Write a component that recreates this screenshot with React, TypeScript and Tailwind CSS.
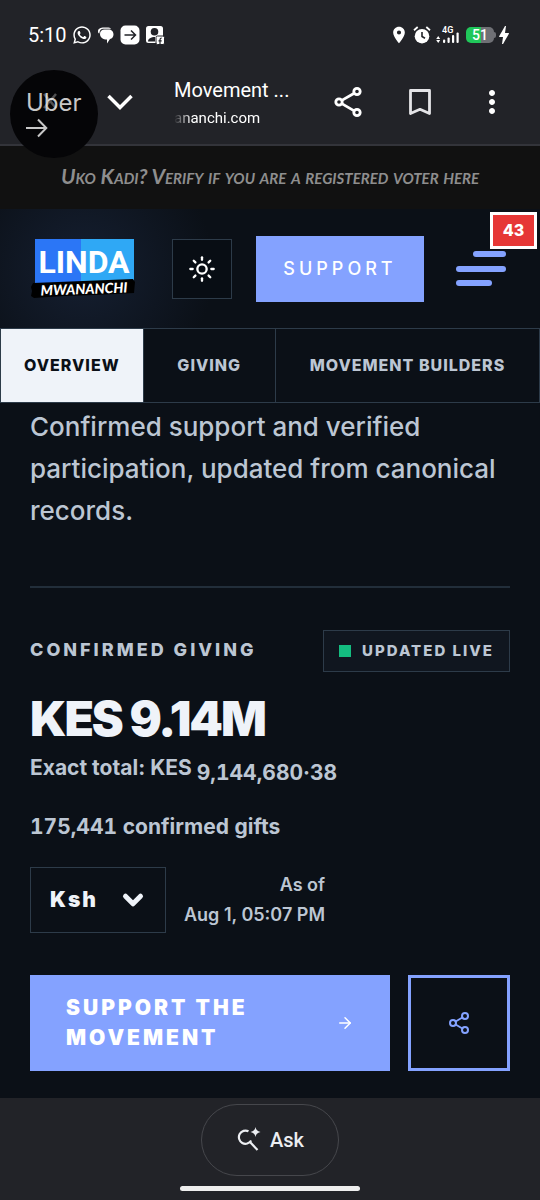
import React, { useState } from 'react';
import { ArrowRight, ChevronDown, Share2, Sun } from 'lucide-react';
import { FaWhatsapp } from 'react-icons/fa';
import { MdBolt, MdLocationOn, MdMoreVert } from 'react-icons/md';

const tabs = [
  { id: 'overview', label: 'OVERVIEW' },
  { id: 'giving', label: 'GIVING' },
  { id: 'builders', label: 'MOVEMENT BUILDERS' },
];

function StatusBar() {
  return (
    <div className="flex items-center justify-between h-[70px] pl-7 pr-8 text-white">
      <div className="flex items-center gap-[5px]">
        <span className="text-[20px] leading-6">5:10</span>
        <FaWhatsapp className="w-5 h-5" />
        {/* chat bubbles */}
        <svg className="w-[18px] h-[18px]" viewBox="0 0 18 18" fill="currentColor">
          <path d="M1 5.500C1 2.500 3.500 1.500 7 1.500h3c2 0 3.500.5 4.200 1.200H7C4 2.700 2.700 4 2.400 7.500 1.300 7.200 1 6.500 1 5.500z" />
          <path d="M3 8c0-2.900 1.800-4.500 4.500-4.500h4C14.500 3.500 16.500 5.500 16.500 8.500c0 2.300-1.300 4-3.500 4.500l-3 4.500v-4C6 13.500 3 11.500 3 8z" />
        </svg>
        {/* boxed arrow */}
        <svg className="w-[20px] h-[20px]" viewBox="0 0 20 20">
          <rect x="0.500" y="0.500" width="19" height="19" rx="5" fill="#fff" />
          <path d="M4.500 10h11M11 5.500l4.500 4.500-4.500 4.500" fill="none" stroke="#222328" strokeWidth="1.500" />
        </svg>
        {/* contact card */}
        <svg className="w-[20px] h-[20px]" viewBox="0 0 20 20">
          <rect x="1" y="1" width="17" height="17" rx="2.500" fill="#fff" />
          <circle cx="9.500" cy="6.800" r="3.800" fill="#222328" />
          <path d="M3 16.500c0-3 3-4.500 7-4.500v4.500z" fill="#222328" />
          <rect x="11" y="11" width="8.500" height="8.500" rx="1.500" fill="#fff" stroke="#222328" />
          <path d="M15 19v-4.500c0-1 .6-1.500 1.800-1.500M13.500 15.800h3.200" fill="none" stroke="#222328" strokeWidth="1.200" />
        </svg>
      </div>
      <div className="flex items-center gap-1">
        <MdLocationOn className="w-5 h-5" />
        {/* alarm clock */}
        <svg className="w-[18px] h-[18px]" viewBox="0 0 18 18">
          <circle cx="9" cy="10.200" r="7.300" fill="#fff" />
          <path d="M1 4.200L4.700 1M17 4.200L13.300 1" stroke="#fff" strokeWidth="1.800" fill="none" />
          <path d="M9 6v4.500l3 1.800" stroke="#222328" strokeWidth="1.600" fill="none" />
        </svg>
        <svg className="w-[27px] h-[20px]" viewBox="-1 0 27 20" fill="currentColor">
          <text x="6" y="8" fontSize="9" fontWeight="600" fontFamily="Roboto, sans-serif">4G</text>
          <path d="M2.200 11l2 3H.2zM2.200 18l2-3H.2z" />
          <rect x="7" y="14.500" width="2.200" height="3.500" rx="1" />
          <rect x="11.500" y="12.500" width="2.200" height="5.500" rx="1" />
          <rect x="16" y="10" width="2.200" height="8" rx="1" />
          <rect x="20.500" y="7.500" width="2.200" height="10.500" rx="1" />
        </svg>
        <span className="flex items-center">
          <span className="w-7 h-4 rounded-[5px] bg-[linear-gradient(90deg,#20c75a_52%,#6f7075_52%)] text-center text-[14px] leading-4 font-medium">51</span>
          <span className="w-0.5 h-1.5 rounded-r bg-[#6f7075]" />
        </span>
        <MdBolt className="w-6 h-6 -mx-2" />
      </div>
    </div>
  );
}

function BrowserBar() {
  return (
    <div className="flex items-center h-16 mb-2.5 pl-[104px] pr-8 text-white">
      <button aria-label="Minimise" className="shrink-0">
        <svg className="w-8 h-8" viewBox="0 0 32 32" fill="none" stroke="currentColor" strokeWidth="3.500">
          <path d="M4.500 10L16 21.500 27.500 10" />
        </svg>
      </button>
      <div className="flex-1 min-w-0 ml-[38px] pt-1">
        <p className="text-[20px] leading-7 truncate">Movement ...</p>
        <p className="text-[15px] leading-7 [mask-image:linear-gradient(90deg,transparent,#000_18px)]">ananchi.com</p>
      </div>
      <div className="flex items-center gap-10">
        <button aria-label="Share">
          <svg className="w-8 h-8" viewBox="0 0 32 32" fill="none" stroke="currentColor" strokeWidth="2.800">
            <circle cx="7" cy="16" r="3.200" />
            <circle cx="25" cy="5.500" r="3.200" />
            <circle cx="25" cy="26.500" r="3.200" />
            <path d="M9.800 14.400L22.200 7.200M9.800 17.600l12.400 7.300" />
          </svg>
        </button>
        <button aria-label="Bookmark">
          <svg className="w-8 h-8" viewBox="0 0 32 32" fill="none" stroke="#e4e4e7" strokeWidth="2.800" strokeLinejoin="round">
            <path d="M6.500 4.500h19v23L16 23.300 6.500 27.500z" />
          </svg>
        </button>
        <button aria-label="More">
          <MdMoreVert className="w-9 h-9 -mx-0.5" />
        </button>
      </div>
    </div>
  );
}

function UberBubble() {
  return (
    <button aria-label="Uber" className="absolute left-2.5 top-[70px] w-[88px] h-[88px] rounded-full bg-[#050507] text-[#c8c8c8] pl-4 text-left">
      <span className="block font-['Inter',sans-serif] text-[24px] leading-7">Uber</span>
      <svg className="w-[22px] h-[22px]" viewBox="0 0 22 22" fill="none" stroke="currentColor" strokeWidth="2">
        <path d="M0 11h20M12 2.500L20.300 11 12 19.500" />
      </svg>
      <svg className="absolute left-8 top-[22px] w-4 h-[18px] opacity-30" viewBox="0 0 16 18" fill="none" stroke="#fff" strokeWidth="2.500">
        <path d="M2 2l12 14M14 2L2 16" />
      </svg>
    </button>
  );
}

function Logo() {
  return (
    <a href="#" aria-label="Linda Mwananchi" className="block w-[106px]">
      <svg className="w-full" viewBox="0 0 106 62">
        <rect x="5" y="1" width="46" height="44" fill="#2b76f6" />
        <rect x="51" y="1" width="53" height="44" fill="#2fa8f5" />
        <text x="54" y="35" textAnchor="middle" fontSize="32" fontWeight="700" fill="#fff" fontFamily="Roboto, sans-serif">LINDA</text>
        <path d="M3 45L103 41l2 3-1 11-40 2-30 1-30 2-3-2 1-5-1-4z" fill="#000" />
        <text x="54" y="56" textAnchor="middle" fontSize="14" fontWeight="900" fontStyle="italic" fill="#fff" fontFamily="Lato, sans-serif" transform="rotate(-2 54 51)">MWANANCHI</text>
      </svg>
    </a>
  );
}

function SiteHeader() {
  return (
    <header className="flex items-center justify-between h-[119px] px-[30px] bg-[radial-gradient(circle_at_84px_60px,#151f31,#0b1017_130px)]">
      <Logo />
      <div className="flex items-center">
        <button aria-label="Toggle theme" className="flex items-center justify-center w-[60px] h-[60px] border border-[#2d3b49] bg-[#080d14] text-white">
          <Sun className="w-7 h-7" />
        </button>
        <button className="w-[168px] h-[66px] ml-6 bg-[#84a2ff] text-white text-[18px] font-medium tracking-[4px]">
          SUPPORT
        </button>
        <button aria-label="Menu, 43 new" className="relative w-[54px] h-[54px] ml-8">
          <svg className="w-[50px] h-9" viewBox="0 0 50 36" fill="#84a2ff">
            <rect x="17" y="0" width="33" height="6" rx="3" />
            <rect x="0" y="15" width="50" height="6" rx="3" />
            <rect x="0" y="29" width="36" height="6" rx="3" />
          </svg>
          <span className="absolute -top-[30px] -right-[27px] w-[47px] h-[37px] border-[3px] border-white bg-[#e63736] text-white text-[16px] leading-[30px] font-extrabold">
            43
          </span>
        </button>
      </div>
    </header>
  );
}

export default function App() {
  const [activeTab, setActiveTab] = useState('overview');
  const [currency, setCurrency] = useState('Ksh');

  return (
    <div className="relative min-h-screen flex flex-col bg-[#0b1017] font-['Inter',sans-serif] text-[#bcc6d3]">
      {/* Phone and browser chrome */}
      <div className="bg-[#222328] border-b-2 border-[#33343a] font-['Roboto',sans-serif]">
        <StatusBar />
        <BrowserBar />
      </div>

      <a href="#" className="block bg-[#111111] py-[18px] h-[63px] text-center text-[21px] leading-6 italic font-bold text-[#8e8e8e] font-['Lato',sans-serif] [font-variant:small-caps]">
        Uko Kadi? Verify if you are a registered voter here
      </a>

      <SiteHeader />

      <nav className="flex border border-[#2d3b49] divide-x divide-[#2d3b49] h-[75px]">
        {tabs.map((tab) => (
          <button
            key={tab.id}
            onClick={() => setActiveTab(tab.id)}
            className={`px-[23px] pb-0.5 text-[16px] font-extrabold tracking-[1px] whitespace-nowrap ${
              activeTab === tab.id ? 'bg-[#eff3f9] text-[#0b1017]' : 'flex-auto'
            }`}
          >
            {tab.label}
          </button>
        ))}
      </nav>

      <main className="flex-1 px-[30px] pt-[3px] pb-[27px]">
        <p className="text-[26px] leading-[42px] font-medium">
          Confirmed support and verified participation, updated from canonical records.
        </p>

        <section className="mt-[54px] pt-[42px] border-t-2 border-[#222e3a]">
          <div className="flex items-center justify-between">
            <h2 className="text-[18px] leading-10 mb-0.5 font-extrabold tracking-[3px]">CONFIRMED GIVING</h2>
            <div className="flex items-center gap-[11px] h-[42px] px-[15px] border border-[#2d3b49] bg-[#10161f]">
              <span className="w-3 h-3 bg-[#14bd80]" />
              <span className="text-[15px] font-extrabold tracking-[2px]">UPDATED LIVE</span>
            </div>
          </div>

          <p className="mt-5 text-[48px] leading-[54px] font-black tracking-[-2px] text-[#eff3f9]">KES 9.14M</p>
          <p className="mt-1 text-[21px] leading-9 font-bold">
            Exact total: KES <span className="align-sub tabular-nums">9,144,680·38</span>
          </p>
          <p className="mt-[18px] text-[21px] leading-9 font-bold tabular-nums">175,441 confirmed gifts</p>

          <div className="flex items-center gap-[18px] mt-[22px]">
            <div className="relative">
              <select
                aria-label="Currency"
                value={currency}
                onChange={(e) => setCurrency(e.target.value)}
                className="appearance-none w-[136px] h-[66px] pl-[19px] border border-[#2d3b49] bg-[#0b1017] text-[#eff3f9] text-[21px] font-black tracking-[2px]"
              >
                <option>Ksh</option>
                <option>USD</option>
              </select>
              <ChevronDown className="absolute right-[18px] top-[18px] w-[30px] h-[30px] text-[#eff3f9] pointer-events-none" strokeWidth={4} />
            </div>
            <p className="text-right text-[18px] leading-[30px] font-semibold">
              As of
              <br />
              Aug 1, 05:07 PM
            </p>
          </div>

          <div className="flex gap-[18px] mt-[42px]">
            <button className="flex-1 flex items-center justify-between h-24 px-9 bg-[#84a2ff] text-white text-left">
              <span className="text-[21px] leading-[30px] font-black tracking-[3px]">
                SUPPORT THE
                <br />
                MOVEMENT
              </span>
              <ArrowRight className="w-[18px] h-[18px]" />
            </button>
            <button aria-label="Share" className="flex items-center justify-center w-[102px] h-24 border-[3px] border-[#84a2ff] text-[#84a2ff]">
              <Share2 className="w-6 h-6" />
            </button>
          </div>
        </section>
      </main>

      <footer className="flex flex-col items-center h-[102px] pt-1.5 bg-[#222328] text-[#eceef2]">
        <button className="flex items-center justify-center gap-2 w-[138px] h-[72px] rounded-full border border-[#46474c] text-[20px] font-medium font-['Roboto',sans-serif]">
          <svg className="w-[26px] h-[26px]" viewBox="0 0 26 26" fill="none" stroke="currentColor" strokeWidth="2.200">
            <path d="M12.500 4.300A6.600 6.600 0 1 0 15.200 13.500M14 15l7.500 8" />
            <path d="M19.500 0c.6 3 1.800 4.200 5 5-3.200.8-4.400 2-5 5-.6-3-1.800-4.200-5-5 3.200-.8 4.400-2 5-5z" fill="currentColor" stroke="none" />
          </svg>
          Ask
        </button>
        <div className="w-[180px] h-[5px] mt-2.5 rounded-full bg-[#eeeeee]" />
      </footer>

      <UberBubble />
    </div>
  );
}
